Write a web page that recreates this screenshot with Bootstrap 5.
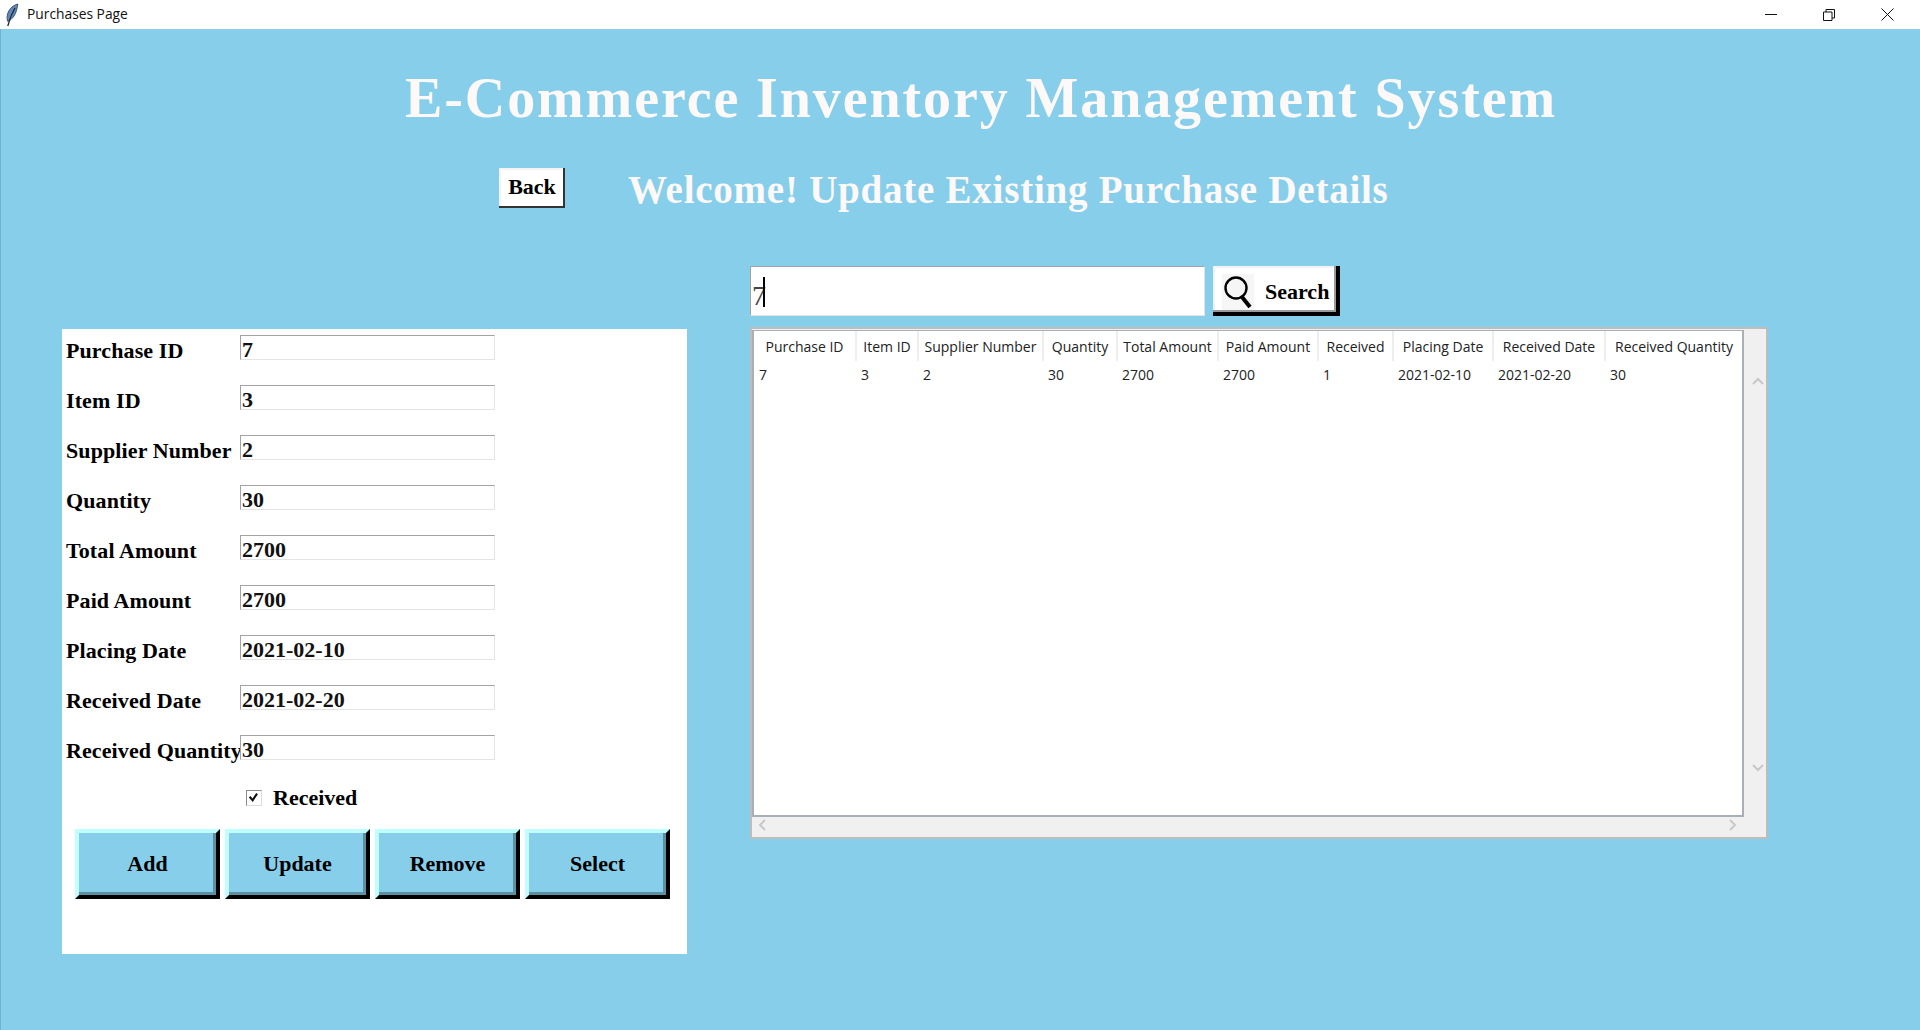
<!DOCTYPE html>
<html lang="en">
<head>
    <meta charset="UTF-8">
    <title>Purchases Page</title>
    <link href="https://cdn.jsdelivr.net/npm/bootstrap@5.3.0/dist/css/bootstrap.min.css" rel="stylesheet">
    <style>
        html, body { height: 100%; overflow: hidden; }
        body { background: #87ceeb; font-family: "Liberation Serif", serif; color: #000; }
        .title-bar { height: 29px; background: #fff; font-family: "Open Sans", sans-serif; font-size: 13.8px; color: #111; }
        .title-bar .app-icon { margin-left: 5px; margin-right: 8px; }
        .win-btns { padding-right: 4px; }
        .win-btn { width: 58px; height: 29px; }
        .window-body { height: 1001px; box-shadow: inset 1px 0 0 #6fb2cf; }
        .main-title { height: 139px; margin: 0; padding-left: 405px; font: bold 56px/138px "Liberation Serif", serif; color: #fdf9f8; letter-spacing: 1.9px; white-space: nowrap; }
        .sub-row { height: 41px; padding-left: 499px; margin-top: -1px; }
        .back-btn { width: 66px; height: 40px; background: #fff; font-size: 22px; font-weight: 700; line-height: 1; border: 0; padding: 0 0 2px; box-shadow: inset -2px -2px 0 #333, inset 2px 2px 0 #f4f4f4; border-radius: 0; }
        .sub-title { margin: 0 0 0 63px; font: bold 39px/41px "Liberation Serif", serif; color: #fdf9f8; letter-spacing: .76px; white-space: nowrap; padding-top: 4px; }
        .work-area { margin-top: 58px; padding-left: 62px; }
        .form-panel { width: 625px; height: 625px; margin-top: 63px; background: #fff; padding: 7px 0 0 4px; }
        .field-row { height: 50px; }
        .field-label { width: 174px; font-size: 22px; font-weight: 700; line-height: 30px; letter-spacing: .1px; white-space: nowrap; }
        .tk-entry { width: 255px; height: 25px; margin-top: -1px; border: 1px solid; border-color: #a3a3a3 #e4e4e4 #e4e4e4 #a3a3a3; border-radius: 0; padding: 4px 0 0 1px; font: 700 22px/20px "Liberation Serif", serif; outline: 0; background: #fff; color: #111; }
        .check-row { height: 40px; padding-left: 180px; margin-top: -8px; }
        .tk-check { appearance: none; width: 16px; height: 16px; margin: 0 11px 0 0; border: 1px solid; border-color: #8a8a8a #ddd #ddd #8a8a8a; background: #fff url("data:image/svg+xml,%3Csvg xmlns='http://www.w3.org/2000/svg' viewBox='0 0 16 16'%3E%3Cpath d='M3 6.500l3.500 4L11.500 3' fill='none' stroke='%23111' stroke-width='2.400'/%3E%3C/svg%3E") center no-repeat; }
        .check-label { font-size: 22px; font-weight: 700; line-height: 30px; }
        .button-row { padding-left: 9px; margin-top: 11px; gap: 5px; }
        .relief-btn { width: 145px; height: 70px; background: #87ceeb; border: 4px solid; border-color: #bfffff #000 #000 #bfffff; border-radius: 0; font: 700 22px/1 "Liberation Serif", serif; color: #000; box-shadow: inset -3px -3px 0 #5e90a4; padding: 0; }
        .right-side { margin-left: 63px; width: 1018px; }
        .search-wrap { position: relative; width: 455px; height: 50px; }
        .search-input { width: 100%; height: 100%; border: 1px solid; border-color: #a3a3a3 #e4e4e4 #e4e4e4 #a3a3a3; padding: 10px 0 0 1px; font: 28px/40px "Liberation Serif", serif; color: #444; outline: 0; }
        .search-caret { position: absolute; left: 13px; top: 11px; width: 2px; height: 30px; background: #000; }
        .search-btn { width: 127px; height: 50px; margin-left: 8px; background: #fff; border: 0; border-radius: 0; box-shadow: inset -4px -4px 0 #000, inset -6px -6px 0 #9a9a9a, inset 2px 2px 0 #f2f2f2; font: 700 22px/1 "Liberation Serif", serif; padding: 2px 0 0 9px; color: #000; }
        .search-btn .glass { background: #f6f6f6; margin-right: 11px; }
        .tree-frame { margin-top: 11px; width: 1018px; height: 512px; background: #f0f0f0; border: 2px solid #bdbdbd; position: relative; }
        .tree-box { width: 992px; height: 487px; margin: 1px 0 0 0; background: #fff; border: 2px solid #a9b0b5; overflow: hidden; border-top-width: 1px; }
        .tree-table { table-layout: fixed; width: 989px; margin: 0; font-family: "Open Sans", sans-serif; font-size: 14px; color: #222; }
        .tree-table th { height: 30px; padding: 0; font-weight: 400; text-align: center; border: 0; border-right: 2px solid #eeeeee; background: #fff; vertical-align: middle; white-space: nowrap; }
        .tree-table td { height: 26px; padding: 0 0 0 5px; border: 0; background: #fff; vertical-align: middle; }
        .scroll-arrow { position: absolute; }
        .arrow-up { left: 1000px; top: 48px; }
        .arrow-down { left: 1000px; top: 435px; }
        .arrow-left { left: 6px; top: 490px; }
        .arrow-right { left: 977px; top: 490px; }
    </style>
</head>
<body>
<div class="title-bar d-flex align-items-center">
    <svg class="app-icon" width="14" height="24" viewBox="0 0 14 24">
        <path d="M12.800 1C7 2.500 2.800 7.500 2.200 13c-.3 2-.1 3.800.6 5.500 4.500-2 7.500-6.500 8.700-11 .6-2 1-4.500 1.300-6.500z" fill="#5f88ba" stroke="#2a3b55" stroke-width=".8"/>
        <path d="M10 5C7 10 4.500 16 2.800 23" fill="none" stroke="#1c2533" stroke-width="1.300"/>
    </svg>
    <span>Purchases Page</span>
    <div class="ms-auto d-flex win-btns">
        <div class="win-btn d-flex align-items-center justify-content-center"><svg width="12" height="12" viewBox="0 0 12 12"><path d="M0 5.500h12" stroke="#111"/></svg></div>
        <div class="win-btn d-flex align-items-center justify-content-center"><svg width="12" height="12" viewBox="0 0 12 12"><path d="M.5 3h8.500v8.500H.5zM3 3V.5h8.500V9H9" fill="none" stroke="#111"/></svg></div>
        <div class="win-btn d-flex align-items-center justify-content-center"><svg width="13" height="13" viewBox="0 0 13 13"><path d="M.5.5l12 12M12.500.5l-12 12" stroke="#111"/></svg></div>
    </div>
</div>

<div class="window-body">
<h1 class="main-title">E-Commerce Inventory Management System</h1>
<div class="sub-row d-flex align-items-center">
    <button class="back-btn" type="button">Back</button>
    <h2 class="sub-title">Welcome! Update Existing Purchase Details</h2>
</div>

<div class="work-area d-flex align-items-start">
    <!-- Formulario -->
    <div class="form-panel">
        <div class="field-row d-flex"><label class="field-label">Purchase ID</label><input class="tk-entry" value="7"></div>
        <div class="field-row d-flex"><label class="field-label">Item ID</label><input class="tk-entry" value="3"></div>
        <div class="field-row d-flex"><label class="field-label">Supplier Number</label><input class="tk-entry" value="2"></div>
        <div class="field-row d-flex"><label class="field-label">Quantity</label><input class="tk-entry" value="30"></div>
        <div class="field-row d-flex"><label class="field-label">Total Amount</label><input class="tk-entry" value="2700"></div>
        <div class="field-row d-flex"><label class="field-label">Paid Amount</label><input class="tk-entry" value="2700"></div>
        <div class="field-row d-flex"><label class="field-label">Placing Date</label><input class="tk-entry" value="2021-02-10"></div>
        <div class="field-row d-flex"><label class="field-label">Received Date</label><input class="tk-entry" value="2021-02-20"></div>
        <div class="field-row d-flex"><label class="field-label">Received Quantity</label><input class="tk-entry" value="30"></div>
        <div class="check-row d-flex align-items-center">
            <input class="tk-check" type="checkbox" checked>
            <label class="check-label">Received</label>
        </div>
        <div class="button-row d-flex">
            <button class="relief-btn" type="button">Add</button>
            <button class="relief-btn" type="button">Update</button>
            <button class="relief-btn" type="button">Remove</button>
            <button class="relief-btn" type="button">Select</button>
        </div>
    </div>

    <!-- Busqueda y tabla -->
    <div class="right-side">
        <div class="d-flex">
            <div class="search-wrap">
                <input class="search-input" value="7">
                <span class="search-caret"></span>
            </div>
            <button class="search-btn d-flex align-items-center" type="button">
                <svg class="glass" width="32" height="36" viewBox="0 0 32 36">
                    <circle cx="14" cy="14" r="10.500" fill="none" stroke="#000" stroke-width="2.400"/>
                    <path d="M20 23l8 10" stroke="#000" stroke-width="4"/>
                </svg>
                Search
            </button>
        </div>
        <div class="tree-frame">
            <div class="tree-box">
                <table class="table tree-table">
                    <colgroup>
                        <col style="width:102px"><col style="width:62px"><col style="width:125px"><col style="width:74px"><col style="width:101px"><col style="width:100px"><col style="width:75px"><col style="width:100px"><col style="width:112px"><col style="width:138px">
                    </colgroup>
                    <thead>
                    <tr>
                        <th>Purchase ID</th><th>Item ID</th><th>Supplier Number</th><th>Quantity</th><th>Total Amount</th><th>Paid Amount</th><th>Received</th><th>Placing Date</th><th>Received Date</th><th>Received Quantity</th>
                    </tr>
                    </thead>
                    <tbody>
                    <tr>
                        <td>7</td><td>3</td><td>2</td><td>30</td><td>2700</td><td>2700</td><td>1</td><td>2021-02-10</td><td>2021-02-20</td><td>30</td>
                    </tr>
                    </tbody>
                </table>
            </div>
            <svg class="scroll-arrow arrow-up" width="12" height="8" viewBox="0 0 12 8"><path d="M1 7l5-5 5 5" fill="none" stroke="#c8c8c8" stroke-width="2"/></svg>
            <svg class="scroll-arrow arrow-down" width="12" height="8" viewBox="0 0 12 8"><path d="M1 1l5 5 5-5" fill="none" stroke="#c8c8c8" stroke-width="2"/></svg>
            <svg class="scroll-arrow arrow-left" width="8" height="12" viewBox="0 0 8 12"><path d="M7 1L2 6l5 5" fill="none" stroke="#c8c8c8" stroke-width="2"/></svg>
            <svg class="scroll-arrow arrow-right" width="8" height="12" viewBox="0 0 8 12"><path d="M1 1l5 5-5 5" fill="none" stroke="#c8c8c8" stroke-width="2"/></svg>
        </div>
    </div>
</div>
</div>
</body>
</html>
